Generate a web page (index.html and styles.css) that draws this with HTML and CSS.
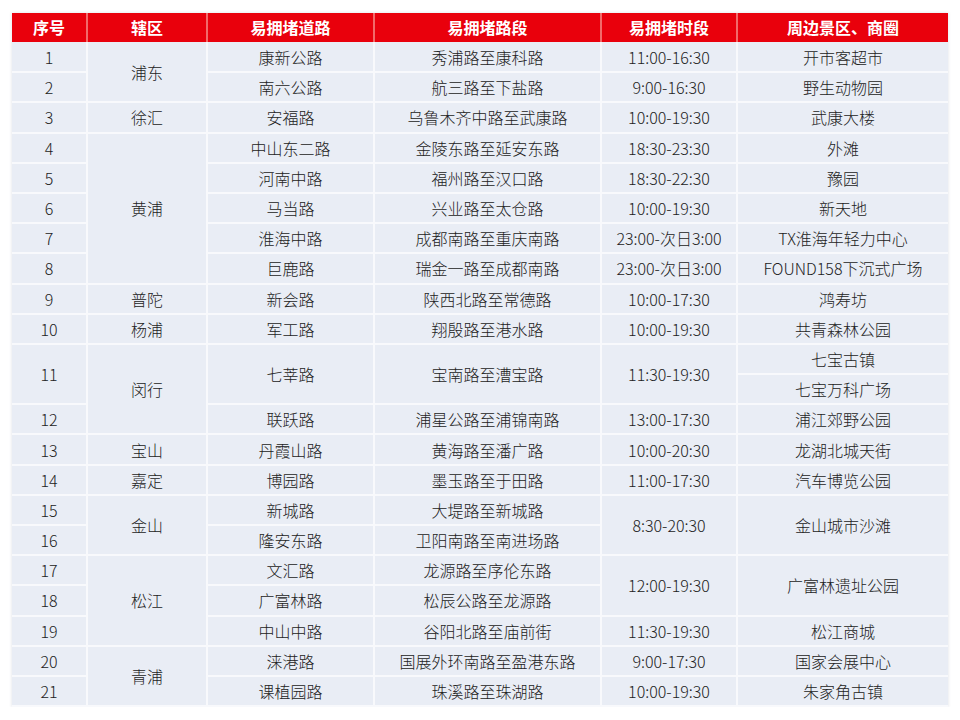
FILE: index.html
```html
<!DOCTYPE html>
<html lang="zh-CN">
<head>
<meta charset="utf-8">
<title>易拥堵道路</title>
<link rel="stylesheet" href="styles.css">
</head>
<body>
<div class="wrap">
<table class="jam">
<colgroup>
<col class="c1"><col class="c2"><col class="c3"><col class="c4"><col class="c5"><col class="c6">
</colgroup>
<thead>
<tr><th>序号</th><th>辖区</th><th>易拥堵道路</th><th>易拥堵路段</th><th>易拥堵时段</th><th>周边景区、商圈</th></tr>
</thead>
<tbody>
<tr><td>1</td><td rowspan="2">浦东</td><td>康新公路</td><td>秀浦路至康科路</td><td>11:00-16:30</td><td>开市客超市</td></tr>
<tr><td>2</td><td>南六公路</td><td>航三路至下盐路</td><td>9:00-16:30</td><td>野生动物园</td></tr>
<tr><td>3</td><td>徐汇</td><td>安福路</td><td>乌鲁木齐中路至武康路</td><td>10:00-19:30</td><td>武康大楼</td></tr>
<tr><td>4</td><td rowspan="5">黄浦</td><td>中山东二路</td><td>金陵东路至延安东路</td><td>18:30-23:30</td><td>外滩</td></tr>
<tr><td>5</td><td>河南中路</td><td>福州路至汉口路</td><td>18:30-22:30</td><td>豫园</td></tr>
<tr><td>6</td><td>马当路</td><td>兴业路至太仓路</td><td>10:00-19:30</td><td>新天地</td></tr>
<tr><td>7</td><td>淮海中路</td><td>成都南路至重庆南路</td><td>23:00-次日3:00</td><td>TX淮海年轻力中心</td></tr>
<tr><td>8</td><td>巨鹿路</td><td>瑞金一路至成都南路</td><td>23:00-次日3:00</td><td>FOUND158下沉式广场</td></tr>
<tr><td>9</td><td>普陀</td><td>新会路</td><td>陕西北路至常德路</td><td>10:00-17:30</td><td>鸿寿坊</td></tr>
<tr><td>10</td><td>杨浦</td><td>军工路</td><td>翔殷路至港水路</td><td>10:00-19:30</td><td>共青森林公园</td></tr>
<tr><td rowspan="2">11</td><td rowspan="3">闵行</td><td rowspan="2">七莘路</td><td rowspan="2">宝南路至漕宝路</td><td rowspan="2">11:30-19:30</td><td>七宝古镇</td></tr>
<tr><td>七宝万科广场</td></tr>
<tr><td>12</td><td>联跃路</td><td>浦星公路至浦锦南路</td><td>13:00-17:30</td><td>浦江郊野公园</td></tr>
<tr><td>13</td><td>宝山</td><td>丹霞山路</td><td>黄海路至潘广路</td><td>10:00-20:30</td><td>龙湖北城天街</td></tr>
<tr><td>14</td><td>嘉定</td><td>博园路</td><td>墨玉路至于田路</td><td>11:00-17:30</td><td>汽车博览公园</td></tr>
<tr><td>15</td><td rowspan="2">金山</td><td>新城路</td><td>大堤路至新城路</td><td rowspan="2">8:30-20:30</td><td rowspan="2">金山城市沙滩</td></tr>
<tr><td>16</td><td>隆安东路</td><td>卫阳南路至南进场路</td></tr>
<tr><td>17</td><td rowspan="3">松江</td><td>文汇路</td><td>龙源路至序伦东路</td><td rowspan="2">12:00-19:30</td><td rowspan="2">广富林遗址公园</td></tr>
<tr><td>18</td><td>广富林路</td><td>松辰公路至龙源路</td></tr>
<tr><td>19</td><td>中山中路</td><td>谷阳北路至庙前街</td><td>11:30-19:30</td><td>松江商城</td></tr>
<tr><td>20</td><td rowspan="2">青浦</td><td>涞港路</td><td>国展外环南路至盈港东路</td><td>9:00-17:30</td><td>国家会展中心</td></tr>
<tr><td>21</td><td>课植园路</td><td>珠溪路至珠湖路</td><td>10:00-19:30</td><td>朱家角古镇</td></tr>
</tbody>
</table>
</div>
</body>
</html>
```
FILE: styles.css
```css
html, body {
  margin: 0;
  padding: 0;
  background: #ffffff;
}
.wrap {
  padding: 13px 12px 0 12px;
}
.jam {
  width: 936px;
  table-layout: fixed;
  border-collapse: collapse;
  font-family: "Noto Sans CJK SC", "Noto Sans", sans-serif;
  font-size: 16px;
  font-weight: 300;
  color: #222222;
  box-shadow: 0 0 3px rgba(120, 130, 150, 0.25);
}
.c1 { width: 75px; }
.c2 { width: 120px; }
.c3 { width: 167px; }
.c4 { width: 227px; }
.c5 { width: 136px; }
.c6 { width: 211px; }
.jam th {
  height: 29px;
  padding: 0;
  background: #e9000c;
  color: #ffffff;
  font-weight: 700;
  font-size: 16px;
  line-height: 29px;
  border-left: 2px solid #f26a6a;
  border-right: 2px solid #f26a6a;
  text-align: center;
}
.jam th:first-child { border-left: none; }
.jam th:last-child { border-right: none; }
.jam tbody tr {
  height: 30.2px;
}
.jam td {
  padding: 0;
  background: #e9edf5;
  border: 2px solid #f8f9fc;
  text-align: center;
  vertical-align: middle;
  line-height: 20px;
  white-space: nowrap;
}
.jam tbody tr:first-child td { border-top: none; }
.jam td:first-child { border-left: none; }
.jam td:last-child { border-right: none; }
```
